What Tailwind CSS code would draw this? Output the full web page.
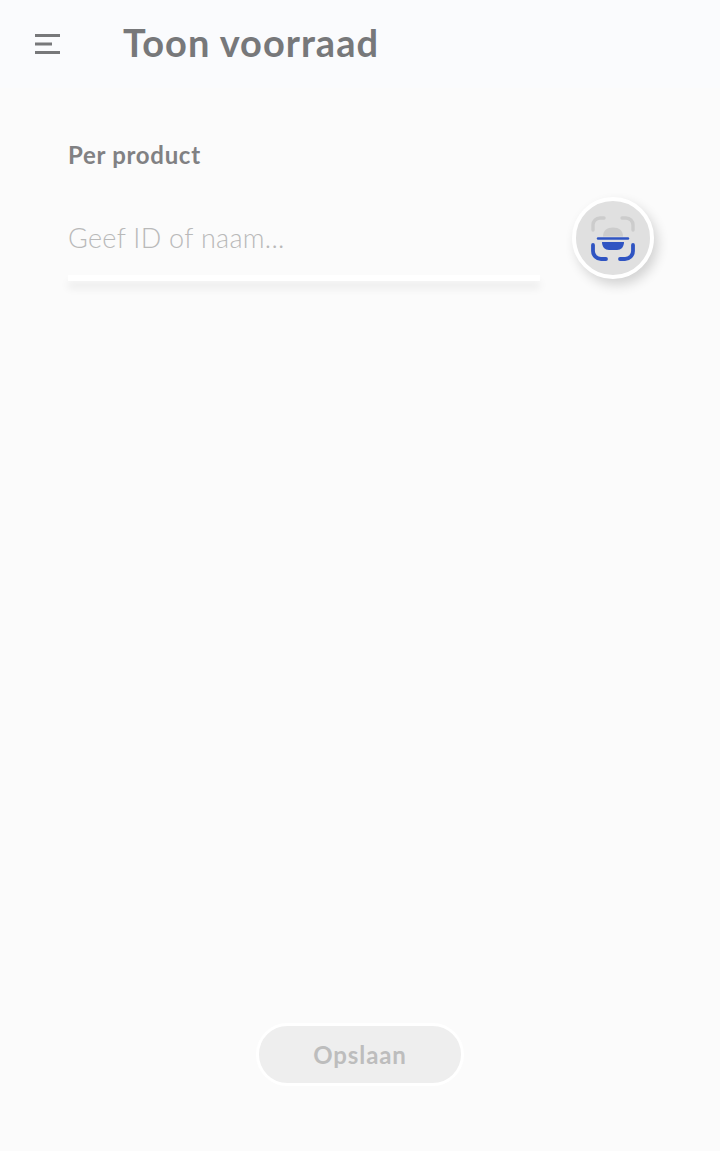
<!DOCTYPE html>
<html lang="en">
<head>
    <meta charset="UTF-8">
    <meta name="viewport" content="width=device-width, initial-scale=1.0">
    <title>Toon voorraad</title>
    <script src="https://cdn.jsdelivr.net/npm/@tailwindcss/browser@4"></script>
</head>
<body class="bg-[#fbfbfb] font-['Lato','Open_Sans',sans-serif]">
    <div class="flex flex-col h-[1151px] w-[720px] overflow-hidden">
        <!-- Header -->
        <header class="flex items-center h-[88px] bg-[#fafbfd] pl-[35px]">
            <svg class="w-[26px] h-[20px]" viewBox="0 0 26 20" fill="#77787a">
                <rect x="0" y="0" width="25" height="3"/>
                <rect x="0" y="8.5" width="17" height="3"/>
                <rect x="0" y="17" width="25" height="3"/>
            </svg>
            <h1 class="ml-[62px] -mt-[4px] text-[38px] tracking-[1px] font-bold text-[#77787a] leading-none">Toon voorraad</h1>
        </header>

        <!-- Form -->
        <main class="flex-1 flex flex-col pl-[68px]">
            <p class="mt-[53px] text-[24px] tracking-[0.7px] font-bold text-[#818183] leading-[28px]">Per product</p>
            <div class="flex mt-[31px]">
                <div class="w-[472px]">
                    <div class="h-[75px] flex items-center text-[27px] tracking-[0.3px] font-light text-[#b9b9b9] leading-none">Geef ID of naam...</div>
                    <div class="h-[6px] bg-white shadow-[0_7px_8px_rgba(0,0,0,0.08)]"></div>
                </div>
                <button class="ml-[32px] -mt-[3px] w-[82px] h-[82px] rounded-full bg-[#e0e0e0] border-[4px] border-white shadow-[4px_6px_12px_rgba(0,0,0,0.16)] flex items-center justify-center">
                    <svg class="w-[46px] h-[46px]" viewBox="0 0 46 46" fill="none" stroke-width="3.4" stroke-linecap="round">
                        <path d="M3 15V10a7 7 0 0 1 7-7h4M32 3h4a7 7 0 0 1 7 7v5" stroke="#cccccc"/>
                        <path d="M13 21.500c0-6 4-9 10-9s10 3 10 9z" fill="#cccccc"/>
                        <path d="M3 30v6a8 8 0 0 0 8 8h5M43 30v6a8 8 0 0 1-8 8h-5" stroke="#2f54c2" stroke-width="3.800"/>
                        <path d="M8 23.500h30" stroke="#2f54c2" stroke-width="2.400"/>
                        <path d="M12 27h22c0 5-3 8-7 8h-8c-4 0-7-3-7-8z" fill="#2f54c2"/>
                    </svg>
                </button>
            </div>
        </main>

        <!-- Save -->
        <div class="flex justify-center pb-[65px]">
            <button class="w-[208px] h-[63px] rounded-full bg-[#eeeeee] border-[3px] border-white text-[24px] tracking-[0.9px] font-bold text-[#bdbdbd]">Opslaan</button>
        </div>
    </div>
</body>
</html>
